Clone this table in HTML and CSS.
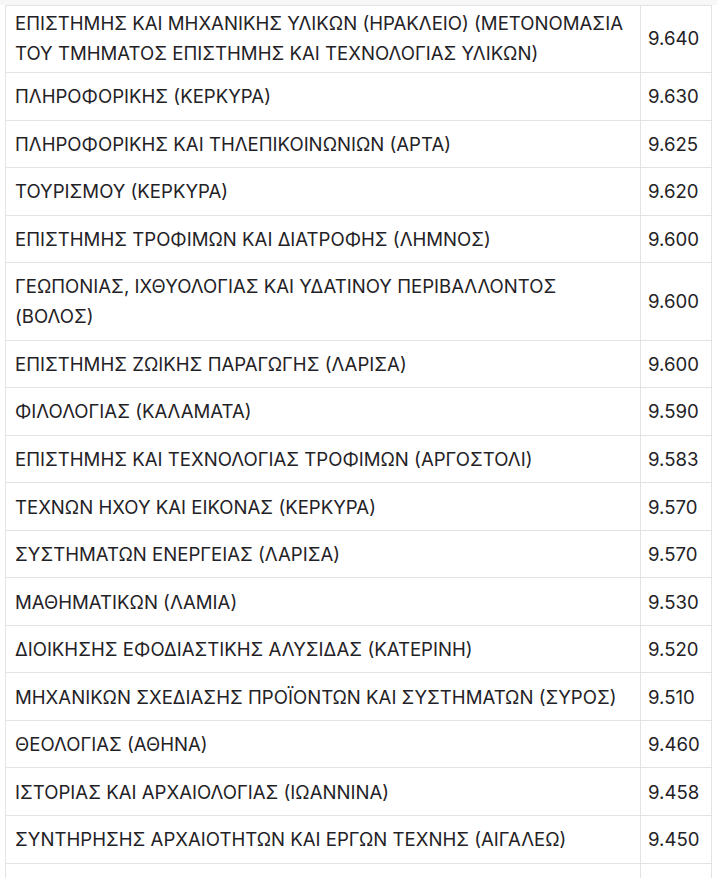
FILE: index.html
```html
<!DOCTYPE html>
<html lang="el">
<head>
<meta charset="utf-8">
<link rel="stylesheet" href="styles.css">
</head>
<body>
<div class="strip"></div>
<div class="wrap">
<table class="scores">
<tbody>
<tr class="first"><td class="name">ΕΠΙΣΤΗΜΗΣ ΚΑΙ ΜΗΧΑΝΙΚΗΣ ΥΛΙΚΩΝ (ΗΡΑΚΛΕΙΟ) (ΜΕΤΟΝΟΜΑΣΙΑ ΤΟΥ ΤΜΗΜΑΤΟΣ ΕΠΙΣΤΗΜΗΣ ΚΑΙ ΤΕΧΝΟΛΟΓΙΑΣ ΥΛΙΚΩΝ)</td><td class="num">9.640</td></tr>
<tr><td class="name">ΠΛΗΡΟΦΟΡΙΚΗΣ (ΚΕΡΚΥΡΑ)</td><td class="num">9.630</td></tr>
<tr><td class="name">ΠΛΗΡΟΦΟΡΙΚΗΣ ΚΑΙ ΤΗΛΕΠΙΚΟΙΝΩΝΙΩΝ (ΑΡΤΑ)</td><td class="num">9.625</td></tr>
<tr><td class="name">ΤΟΥΡΙΣΜΟΥ (ΚΕΡΚΥΡΑ)</td><td class="num">9.620</td></tr>
<tr><td class="name">ΕΠΙΣΤΗΜΗΣ ΤΡΟΦΙΜΩΝ ΚΑΙ ΔΙΑΤΡΟΦΗΣ (ΛΗΜΝΟΣ)</td><td class="num">9.600</td></tr>
<tr><td class="name">ΓΕΩΠΟΝΙΑΣ, ΙΧΘΥΟΛΟΓΙΑΣ ΚΑΙ ΥΔΑΤΙΝΟΥ ΠΕΡΙΒΑΛΛΟΝΤΟΣ (ΒΟΛΟΣ)</td><td class="num">9.600</td></tr>
<tr><td class="name">ΕΠΙΣΤΗΜΗΣ ΖΩΙΚΗΣ ΠΑΡΑΓΩΓΗΣ (ΛΑΡΙΣΑ)</td><td class="num">9.600</td></tr>
<tr><td class="name">ΦΙΛΟΛΟΓΙΑΣ (ΚΑΛΑΜΑΤΑ)</td><td class="num">9.590</td></tr>
<tr><td class="name">ΕΠΙΣΤΗΜΗΣ ΚΑΙ ΤΕΧΝΟΛΟΓΙΑΣ ΤΡΟΦΙΜΩΝ (ΑΡΓΟΣΤΟΛΙ)</td><td class="num">9.583</td></tr>
<tr><td class="name">ΤΕΧΝΩΝ ΗΧΟΥ ΚΑΙ ΕΙΚΟΝΑΣ (ΚΕΡΚΥΡΑ)</td><td class="num">9.570</td></tr>
<tr><td class="name">ΣΥΣΤΗΜΑΤΩΝ ΕΝΕΡΓΕΙΑΣ (ΛΑΡΙΣΑ)</td><td class="num">9.570</td></tr>
<tr><td class="name">ΜΑΘΗΜΑΤΙΚΩΝ (ΛΑΜΙΑ)</td><td class="num">9.530</td></tr>
<tr><td class="name">ΔΙΟΙΚΗΣΗΣ ΕΦΟΔΙΑΣΤΙΚΗΣ ΑΛΥΣΙΔΑΣ (ΚΑΤΕΡΙΝΗ)</td><td class="num">9.520</td></tr>
<tr><td class="name">ΜΗΧΑΝΙΚΩΝ ΣΧΕΔΙΑΣΗΣ ΠΡΟΪΟΝΤΩΝ ΚΑΙ ΣΥΣΤΗΜΑΤΩΝ (ΣΥΡΟΣ)</td><td class="num">9.510</td></tr>
<tr><td class="name">ΘΕΟΛΟΓΙΑΣ (ΑΘΗΝΑ)</td><td class="num">9.460</td></tr>
<tr><td class="name">ΙΣΤΟΡΙΑΣ ΚΑΙ ΑΡΧΑΙΟΛΟΓΙΑΣ (ΙΩΑΝΝΙΝΑ)</td><td class="num">9.458</td></tr>
<tr><td class="name">ΣΥΝΤΗΡΗΣΗΣ ΑΡΧΑΙΟΤΗΤΩΝ ΚΑΙ ΕΡΓΩΝ ΤΕΧΝΗΣ (ΑΙΓΑΛΕΩ)</td><td class="num">9.450</td></tr>
<tr><td class="name">&nbsp;</td><td class="num">&nbsp;</td></tr>
</tbody>
</table>
</div>
</body>
</html>
```
FILE: styles.css
```css
html, body {
  margin: 0;
  padding: 0;
  background: #ffffff;
  overflow: hidden;
}
body {
  font-family: Inter, "Noto Sans", sans-serif;
  color: #1f2226;
}
.strip {
  height: 5px;
  background: #f7f7f7;
}
.wrap {
  padding-left: 5px;
}
.scores {
  border-collapse: collapse;
  width: 707px;
  font-size: 18.6px;
  line-height: 30px;
}
.scores td {
  border: 1px solid #e3e3e3;
  padding: 8.27px 10px 8.27px 9px;
  vertical-align: middle;
}
.scores td.name {
  width: 615px;
}
.scores td.num {
  padding-left: 7px;
  padding-right: 6px;
}
.scores tr.first td {
  padding-top: 2px;
  padding-bottom: 4px;
}
```
